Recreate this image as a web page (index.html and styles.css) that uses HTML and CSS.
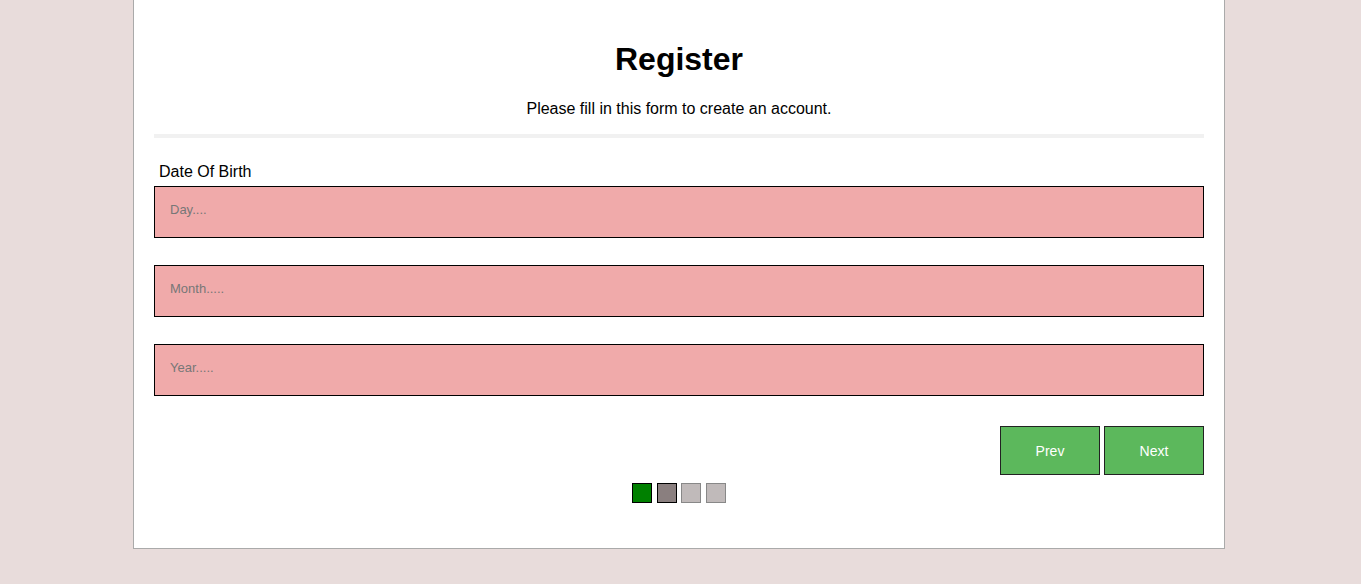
FILE: index.html
```html
<!DOCTYPE html>
<html>
<head>
<meta charset="utf-8">
<link rel="stylesheet" href="styles.css">
</head>
<body>
<form class="card">
  <h1 class="title">Register</h1>
  <p class="subtitle">Please fill in this form to create an account.</p>
  <hr class="divider">
  <div class="tab">
    <label class="label">Date Of Birth</label>
    <input class="field" placeholder="Day....">
    <input class="field" placeholder="Month.....">
    <input class="field" placeholder="Year.....">
  </div>
  <div class="nav">
    <button type="button" class="btn">Prev</button>
    <button type="button" class="btn">Next</button>
  </div>
  <div class="steps">
    <span class="step done"></span>
    <span class="step active"></span>
    <span class="step"></span>
    <span class="step"></span>
  </div>
</form>
</body>
</html>
```

FILE: styles.css
```css
html, body {
  margin: 0;
  padding: 0;
  background: #e8dcdb;
  font-family: "Liberation Sans", Arial, sans-serif;
  color: #000;
}
.card {
  display: block;
  width: 1050px;
  margin: 0 0 36px 133px;
  padding: 20px 20px 45px 20px;
  background: #fff;
  border: 1px solid #aaa;
  border-top: none;
}
.title {
  margin: 21px 0 22px 0;
  font-size: 32px;
  line-height: 37px;
  text-align: center;
  font-weight: bold;
}
.subtitle {
  margin: 0 0 16px 0;
  font-size: 16px;
  line-height: 18px;
  text-align: center;
}
.divider {
  margin: 0 0 25px 0;
  border: none;
  height: 4px;
  background: #f1f1f1;
}
.tab {
  display: flex;
  flex-direction: column;
}
.label {
  font-size: 16px;
  line-height: 18px;
  padding-left: 5px;
  margin-bottom: 5px;
}
.field {
  box-sizing: border-box;
  width: 100%;
  height: 52px;
  margin: 0 0 27px 0;
  padding: 0 15px 5px 15px;
  border: 1px solid #000;
  background: #f0aaaa;
  font-family: "Liberation Sans", Arial, sans-serif;
  font-size: 13px;
  outline: none;
}
.field::placeholder {
  color: #777;
}
.nav {
  display: flex;
  justify-content: flex-end;
  gap: 4px;
  margin-top: 3px;
}
.btn {
  box-sizing: border-box;
  width: 100px;
  height: 49px;
  background: #5cb85c;
  color: #fff;
  border: 1px solid #222;
  font-family: "Liberation Sans", Arial, sans-serif;
  font-size: 14px;
  padding: 0;
  margin: 0;
}
.steps {
  display: flex;
  justify-content: center;
  gap: 4.7px;
  margin-top: 8px;
}
.step {
  box-sizing: border-box;
  width: 20px;
  height: 20px;
  background: #c0baba;
  border: 1px solid #888;
}
.step.done {
  background: #008000;
  border-color: #000;
}
.step.active {
  background: #8a7f7f;
  border-color: #000;
}
```
